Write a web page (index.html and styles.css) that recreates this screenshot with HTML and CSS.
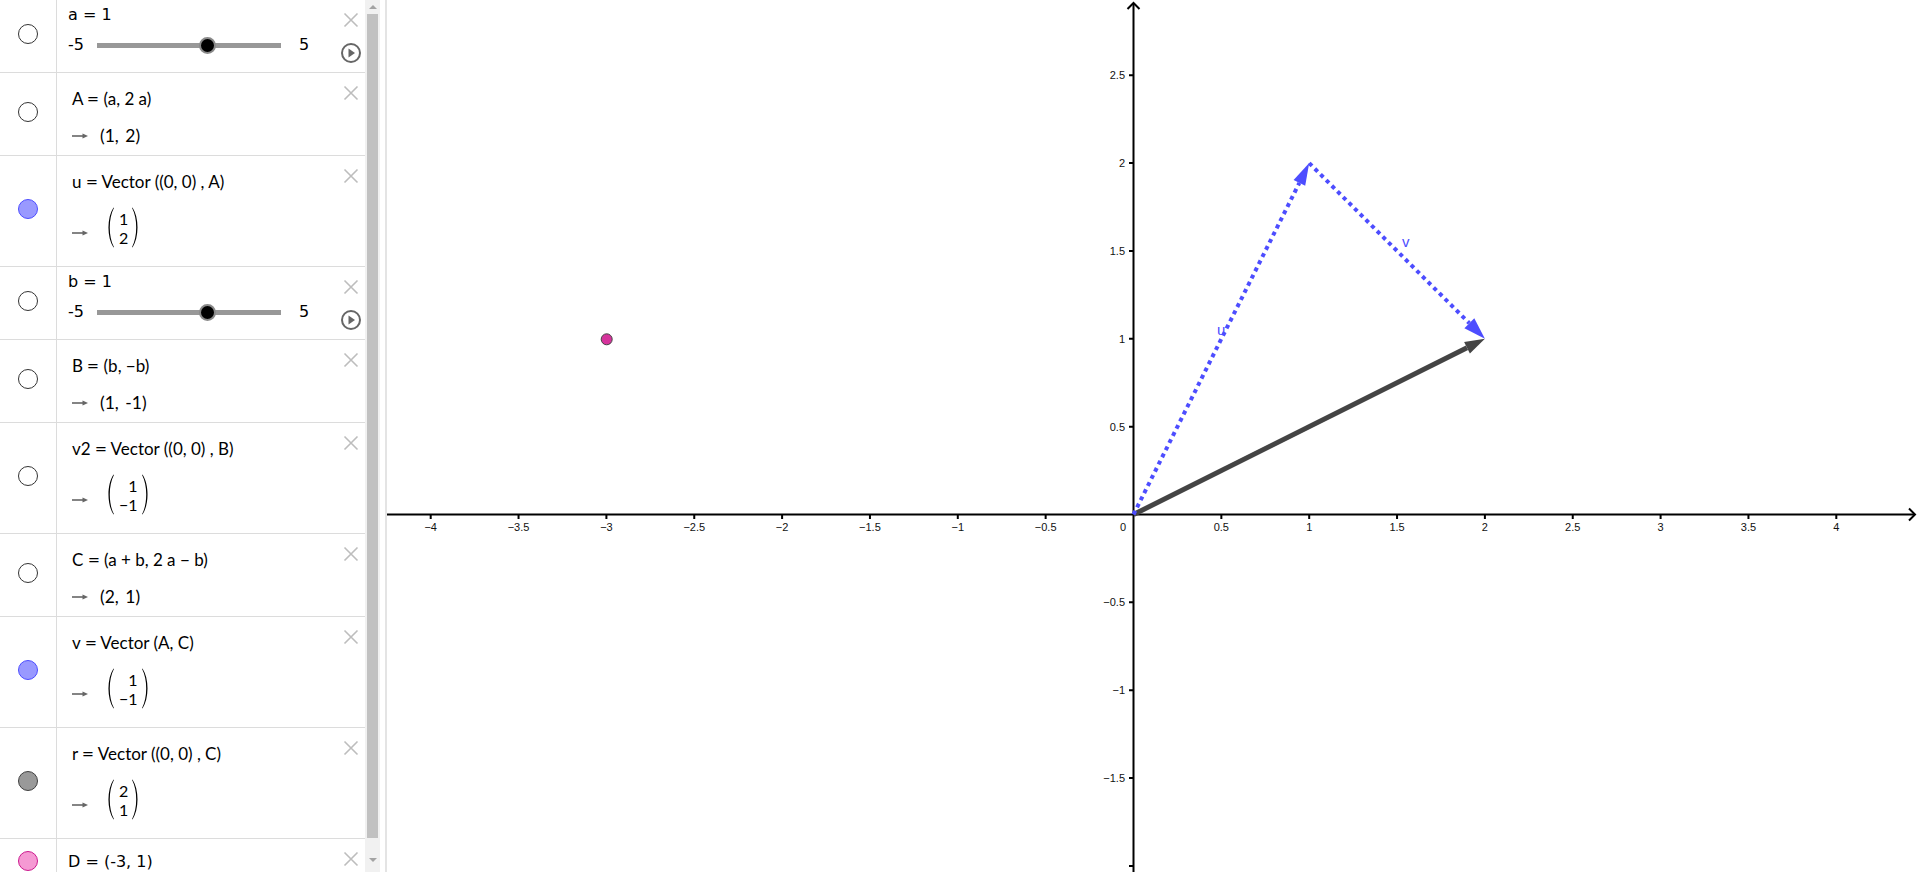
FILE: index.html
```html
<!DOCTYPE html>
<html>
<head>
<meta charset="utf-8">
<link rel="stylesheet" href="styles.css">
</head>
<body>
<div class="app">
  <div class="algebra">
    <div class="list">

      <div class="row row-slider">
        <div class="marker"><span class="dot dot-empty"></span></div>
        <div class="content content-slider">
          <div class="slabel">a = 1</div>
          <div class="slider"><span class="smin">-5</span><div class="track"><span class="knob"></span></div><span class="smax">5</span></div>
        </div>
        <div class="actions">
          <svg class="close" viewBox="0 0 16 16" width="16" height="16"><path d="M1.5 1.5L14.5 14.5M14.5 1.5L1.5 14.5"/></svg>
          <svg class="play" viewBox="0 0 20 20" width="20" height="20"><circle cx="10" cy="10" r="9"/><polygon points="7.5,5.5 14,10 7.5,14.5"/></svg>
        </div>
      </div>

      <div class="row row-point">
        <div class="marker"><span class="dot dot-empty"></span></div>
        <div class="content content-formula">
          <div class="flabel">A <span class="eq">=</span> (a, 2 a)</div>
          <div class="fresult"><svg class="arrow" viewBox="0 0 16 8" width="16" height="8"><path class="shaft" d="M0 4H12"/><path class="head" d="M10.5 1.5L16 4L10.5 6.5Z"/></svg><span class="rtext">(1, 2)</span></div>
        </div>
        <div class="actions">
          <svg class="close" viewBox="0 0 16 16" width="16" height="16"><path d="M1.5 1.5L14.5 14.5M14.5 1.5L1.5 14.5"/></svg>
        </div>
      </div>

      <div class="row row-vector">
        <div class="marker"><span class="dot dot-blue"></span></div>
        <div class="content content-formula">
          <div class="flabel">u <span class="eq">=</span> Vector ((0, 0) , A)</div>
          <div class="vresult"><svg class="arrow" viewBox="0 0 16 8" width="16" height="8"><path class="shaft" d="M0 4H12"/><path class="head" d="M10.5 1.5L16 4L10.5 6.5Z"/></svg>
            <span class="matrix">
              <svg class="paren" viewBox="0 0 8 41" width="8" height="41"><path d="M7.5 0.5C0.8 10.5 0.8 30.5 7.5 40.5L7.9 40C2.4 30 2.4 11 7.9 1Z"/></svg>
              <span class="cells"><span>1</span><span>2</span></span>
              <svg class="paren" viewBox="0 0 8 41" width="8" height="41"><path d="M0.5 0.5C7.2 10.5 7.2 30.5 0.5 40.5L0.1 40C5.6 30 5.6 11 0.1 1Z"/></svg>
            </span>
          </div>
        </div>
        <div class="actions">
          <svg class="close" viewBox="0 0 16 16" width="16" height="16"><path d="M1.5 1.5L14.5 14.5M14.5 1.5L1.5 14.5"/></svg>
        </div>
      </div>

      <div class="row row-slider">
        <div class="marker"><span class="dot dot-empty"></span></div>
        <div class="content content-slider">
          <div class="slabel">b = 1</div>
          <div class="slider"><span class="smin">-5</span><div class="track"><span class="knob"></span></div><span class="smax">5</span></div>
        </div>
        <div class="actions">
          <svg class="close" viewBox="0 0 16 16" width="16" height="16"><path d="M1.5 1.5L14.5 14.5M14.5 1.5L1.5 14.5"/></svg>
          <svg class="play" viewBox="0 0 20 20" width="20" height="20"><circle cx="10" cy="10" r="9"/><polygon points="7.5,5.5 14,10 7.5,14.5"/></svg>
        </div>
      </div>

      <div class="row row-point">
        <div class="marker"><span class="dot dot-empty"></span></div>
        <div class="content content-formula">
          <div class="flabel">B <span class="eq">=</span> (b, −b)</div>
          <div class="fresult"><svg class="arrow" viewBox="0 0 16 8" width="16" height="8"><path class="shaft" d="M0 4H12"/><path class="head" d="M10.5 1.5L16 4L10.5 6.5Z"/></svg><span class="rtext">(1, -1)</span></div>
        </div>
        <div class="actions">
          <svg class="close" viewBox="0 0 16 16" width="16" height="16"><path d="M1.5 1.5L14.5 14.5M14.5 1.5L1.5 14.5"/></svg>
        </div>
      </div>

      <div class="row row-vector">
        <div class="marker"><span class="dot dot-empty"></span></div>
        <div class="content content-formula">
          <div class="flabel">v2 <span class="eq">=</span> Vector ((0, 0) , B)</div>
          <div class="vresult"><svg class="arrow" viewBox="0 0 16 8" width="16" height="8"><path class="shaft" d="M0 4H12"/><path class="head" d="M10.5 1.5L16 4L10.5 6.5Z"/></svg>
            <span class="matrix">
              <svg class="paren" viewBox="0 0 8 41" width="8" height="41"><path d="M7.5 0.5C0.8 10.5 0.8 30.5 7.5 40.5L7.9 40C2.4 30 2.4 11 7.9 1Z"/></svg>
              <span class="cells"><span>1</span><span>−1</span></span>
              <svg class="paren" viewBox="0 0 8 41" width="8" height="41"><path d="M0.5 0.5C7.2 10.5 7.2 30.5 0.5 40.5L0.1 40C5.6 30 5.6 11 0.1 1Z"/></svg>
            </span>
          </div>
        </div>
        <div class="actions">
          <svg class="close" viewBox="0 0 16 16" width="16" height="16"><path d="M1.5 1.5L14.5 14.5M14.5 1.5L1.5 14.5"/></svg>
        </div>
      </div>

      <div class="row row-point">
        <div class="marker"><span class="dot dot-empty"></span></div>
        <div class="content content-formula">
          <div class="flabel">C <span class="eq">=</span> (a + b, 2 a − b)</div>
          <div class="fresult"><svg class="arrow" viewBox="0 0 16 8" width="16" height="8"><path class="shaft" d="M0 4H12"/><path class="head" d="M10.5 1.5L16 4L10.5 6.5Z"/></svg><span class="rtext">(2, 1)</span></div>
        </div>
        <div class="actions">
          <svg class="close" viewBox="0 0 16 16" width="16" height="16"><path d="M1.5 1.5L14.5 14.5M14.5 1.5L1.5 14.5"/></svg>
        </div>
      </div>

      <div class="row row-vector">
        <div class="marker"><span class="dot dot-blue"></span></div>
        <div class="content content-formula">
          <div class="flabel">v <span class="eq">=</span> Vector (A, C)</div>
          <div class="vresult"><svg class="arrow" viewBox="0 0 16 8" width="16" height="8"><path class="shaft" d="M0 4H12"/><path class="head" d="M10.5 1.5L16 4L10.5 6.5Z"/></svg>
            <span class="matrix">
              <svg class="paren" viewBox="0 0 8 41" width="8" height="41"><path d="M7.5 0.5C0.8 10.5 0.8 30.5 7.5 40.5L7.9 40C2.4 30 2.4 11 7.9 1Z"/></svg>
              <span class="cells"><span>1</span><span>−1</span></span>
              <svg class="paren" viewBox="0 0 8 41" width="8" height="41"><path d="M0.5 0.5C7.2 10.5 7.2 30.5 0.5 40.5L0.1 40C5.6 30 5.6 11 0.1 1Z"/></svg>
            </span>
          </div>
        </div>
        <div class="actions">
          <svg class="close" viewBox="0 0 16 16" width="16" height="16"><path d="M1.5 1.5L14.5 14.5M14.5 1.5L1.5 14.5"/></svg>
        </div>
      </div>

      <div class="row row-vector">
        <div class="marker"><span class="dot dot-gray"></span></div>
        <div class="content content-formula">
          <div class="flabel">r <span class="eq">=</span> Vector ((0, 0) , C)</div>
          <div class="vresult"><svg class="arrow" viewBox="0 0 16 8" width="16" height="8"><path class="shaft" d="M0 4H12"/><path class="head" d="M10.5 1.5L16 4L10.5 6.5Z"/></svg>
            <span class="matrix">
              <svg class="paren" viewBox="0 0 8 41" width="8" height="41"><path d="M7.5 0.5C0.8 10.5 0.8 30.5 7.5 40.5L7.9 40C2.4 30 2.4 11 7.9 1Z"/></svg>
              <span class="cells"><span>2</span><span>1</span></span>
              <svg class="paren" viewBox="0 0 8 41" width="8" height="41"><path d="M0.5 0.5C7.2 10.5 7.2 30.5 0.5 40.5L0.1 40C5.6 30 5.6 11 0.1 1Z"/></svg>
            </span>
          </div>
        </div>
        <div class="actions">
          <svg class="close" viewBox="0 0 16 16" width="16" height="16"><path d="M1.5 1.5L14.5 14.5M14.5 1.5L1.5 14.5"/></svg>
        </div>
      </div>

      <div class="row row-simple">
        <div class="marker"><span class="dot dot-pink"></span></div>
        <div class="content content-slider">
          <div class="dlabel">D = (-3, 1)</div>
        </div>
        <div class="actions">
          <svg class="close" viewBox="0 0 16 16" width="16" height="16"><path d="M1.5 1.5L14.5 14.5M14.5 1.5L1.5 14.5"/></svg>
        </div>
      </div>

    </div>
    <div class="scrollbar">
      <div class="sb-btn sb-up"><span class="tri-up"></span></div>
      <div class="sb-track"><div class="sb-thumb"></div></div>
      <div class="sb-btn sb-down"><span class="tri-down"></span></div>
    </div>
  </div>
  <div class="splitter"></div>
  <div class="graphics">
    <svg class="plot" viewBox="387 0 1533 872" width="1533" height="872">
      <g class="axes">
        <line x1="387" y1="514.5" x2="1914" y2="514.5"/>
        <polyline class="axarrow" points="1909,508.5 1915,514.5 1909,520.5"/>
        <line x1="1133.5" y1="3" x2="1133.5" y2="872"/>
        <polyline class="axarrow" points="1127.5,9 1133.5,3 1139.5,9"/>
        <path class="ticks" d="M430.7 515V519M518.55 515V519M606.4 515V519M694.25 515V519M782.1 515V519M869.95 515V519M957.8 515V519M1045.65 515V519M1221.35 515V519M1309.2 515V519M1397.05 515V519M1484.9 515V519M1572.75 515V519M1660.6 515V519M1748.45 515V519M1836.3 515V519
          M1133 75.25H1129M1133 163.1H1129M1133 250.95H1129M1133 338.8H1129M1133 426.65H1129M1133 602.35H1129M1133 690.2H1129M1133 778.05H1129M1133 865.9H1129"/>
      </g>
      <g class="xlabels">
        <text x="430.7" y="531">−4</text>
        <text x="518.55" y="531">−3.5</text>
        <text x="606.4" y="531">−3</text>
        <text x="694.25" y="531">−2.5</text>
        <text x="782.1" y="531">−2</text>
        <text x="869.95" y="531">−1.5</text>
        <text x="957.8" y="531">−1</text>
        <text x="1045.65" y="531">−0.5</text>
        <text x="1221.35" y="531">0.5</text>
        <text x="1309.2" y="531">1</text>
        <text x="1397.05" y="531">1.5</text>
        <text x="1484.9" y="531">2</text>
        <text x="1572.75" y="531">2.5</text>
        <text x="1660.6" y="531">3</text>
        <text x="1748.45" y="531">3.5</text>
        <text x="1836.3" y="531">4</text>
      </g>
      <g class="ylabels">
        <text x="1126" y="531">0</text>
        <text x="1125" y="79.25">2.5</text>
        <text x="1125" y="167.1">2</text>
        <text x="1125" y="254.95">1.5</text>
        <text x="1125" y="342.8">1</text>
        <text x="1125" y="430.65">0.5</text>
        <text x="1125" y="606.35">−0.5</text>
        <text x="1125" y="694.2">−1</text>
        <text x="1125" y="782.05">−1.5</text>
      </g>
      <line class="vec-r" x1="1133.5" y1="514.5" x2="1467" y2="347.7"/>
      <polygon class="head-r" points="1484.9,338.8 1469.9,353.6 1464.1,341.9"/>
      <line class="vec-dot" x1="1133.5" y1="514.5" x2="1299.4" y2="182.8"/>
      <polygon class="head-b" points="1309.2,163.1 1305.2,185.7 1293.6,179.9"/>
      <line class="vec-dot" x1="1309.2" y1="163.1" x2="1469.3" y2="323.2"/>
      <polygon class="head-b" points="1484.9,338.8 1474.3,318.3 1464.4,328.2"/>
      <text class="vlabel" x="1217" y="335">u</text>
      <text class="vlabel" x="1402" y="246.5">v</text>
      <circle class="pt" cx="606.7" cy="339.3" r="5.5"/>
    </svg>
  </div>
</div>
</body>
</html>
```

FILE: styles.css
```css
html, body {
  margin: 0;
  padding: 0;
  background: #fff;
}
body {
  width: 1920px;
  height: 872px;
  overflow: hidden;
  font-family: "DejaVu Sans", sans-serif;
  color: #000;
}
.app {
  display: flex;
  height: 872px;
}
.algebra {
  display: flex;
  width: 380px;
  flex: none;
  height: 872px;
}
.list {
  width: 365px;
  height: 872px;
  overflow: hidden;
}
.row {
  display: grid;
  grid-template-columns: 57px 1fr 28px;
  box-sizing: border-box;
  border-bottom: 1px solid #dcdcdc;
}
.row-slider { height: 73px; }
.row-point { height: 83px; }
.row-vector { height: 111px; }
.row-simple { height: 48px; border-bottom: none; }

.marker {
  border-right: 1px solid #dcdcdc;
  display: flex;
  align-items: center;
  justify-content: center;
  padding-bottom: 4px;
}
.dot {
  display: block;
  width: 20px;
  height: 20px;
  box-sizing: border-box;
  border-radius: 50%;
  border: 1px solid #333;
  background: #fff;
}
.dot-blue { background: #9999ff; border-color: #4d4dff; }
.dot-gray { background: #999999; border-color: #404040; }
.dot-pink { background: #f599d3; border-color: #cc1a8f; }

.content-slider { padding-left: 11px; }
.content-formula { padding-left: 15px; }

.slabel, .dlabel {
  font: 16px/20px "DejaVu Sans", sans-serif;
  padding-top: 5px;
}
.dlabel { padding-top: 14px; line-height: 18px; }
.slider {
  display: flex;
  align-items: center;
  height: 20px;
  margin-top: 10px;
  font: 16px/20px "DejaVu Sans", sans-serif;
}
.smin { width: 29px; }
.track {
  width: 184px;
  height: 5px;
  background: #989898;
  position: relative;
}
.knob {
  position: absolute;
  left: 60%;
  top: 50%;
  width: 17px;
  height: 17px;
  margin: -8.5px 0 0 -8.5px;
  box-sizing: border-box;
  border-radius: 50%;
  background: #000;
  border: 2px solid #8a8a8a;
}
.smax { margin-left: 18px; }

.actions {
  display: flex;
  flex-direction: column;
  align-items: center;
  padding-top: 12px;
}
.close path {
  stroke: #bdbdbd;
  stroke-width: 1.6;
  fill: none;
}
.play { margin-top: 15px; }
.play circle {
  fill: none;
  stroke: #666;
  stroke-width: 2;
}
.play polygon { fill: #666; }

.flabel {
  font: 17px/20px "Lato", sans-serif;
  padding-top: 16px;
  white-space: nowrap;
}
.eq {
  display: inline-block;
  transform: scaleX(1.25);
  margin: 0 1px;
}
.fresult {
  display: flex;
  align-items: center;
  height: 20px;
  margin-top: 17px;
  font: 17.5px/20px "Lato", sans-serif;
  word-spacing: 2px;
}
.arrow {
  flex: none;
  margin-right: 12px;
}
.arrow .shaft { stroke: #666; stroke-width: 1.6; fill: none; }
.arrow .head { fill: #666; }
.vresult {
  display: flex;
  align-items: center;
  height: 41px;
  margin-top: 15px;
}
.vresult .arrow { margin-top: 10px; }
.matrix {
  display: flex;
  align-items: center;
  margin-left: 6px;
}
.paren path { fill: #000; }
.cells {
  display: flex;
  flex-direction: column;
  align-items: flex-end;
  font: 16px/19px "Lato", sans-serif;
  padding: 0 4px 0 5px;
}

.scrollbar {
  width: 15px;
  height: 872px;
  background: #f1f1f1;
  display: flex;
  flex-direction: column;
}
.sb-btn {
  display: flex;
  justify-content: center;
  align-items: center;
}
.sb-up { height: 14px; }
.sb-down { height: 20px; align-items: flex-start; padding-top: 6px; box-sizing: border-box; }
.sb-track {
  flex: 1;
  padding: 0 2px;
}
.sb-thumb {
  height: 824px;
  background: #c1c1c1;
}
.tri-up {
  width: 0; height: 0;
  border-left: 4px solid transparent;
  border-right: 4px solid transparent;
  border-bottom: 4px solid #a3a3a3;
}
.tri-down {
  width: 0; height: 0;
  border-left: 4px solid transparent;
  border-right: 4px solid transparent;
  border-top: 4px solid #a3a3a3;
}

.splitter {
  width: 5px;
  flex: none;
  border-right: 2px solid #e4e4e4;
}
.graphics {
  flex: 1;
  height: 872px;
  overflow: hidden;
}
.plot { display: block; }
.axes line, .axes .ticks {
  stroke: #000;
  stroke-width: 2;
  fill: none;
}
.axarrow {
  fill: none;
  stroke: #000;
  stroke-width: 2;
}
.xlabels text {
  font: 11px "Liberation Sans", Arial, sans-serif;
  text-anchor: middle;
  fill: #111;
}
.ylabels text {
  font: 11px "Liberation Sans", Arial, sans-serif;
  text-anchor: end;
  fill: #111;
}
.vec-r {
  stroke: #444;
  stroke-width: 5;
}
.head-r { fill: #444; }
.vec-dot {
  stroke: #4d4dff;
  stroke-width: 4;
  stroke-dasharray: 4 4;
}
.head-b { fill: #4d4dff; }
.vlabel {
  font: 15px "Liberation Sans", Arial, sans-serif;
  fill: #4d4dff;
}
.pt {
  fill: #d6339c;
  stroke: #444;
  stroke-width: 1;
}
```
